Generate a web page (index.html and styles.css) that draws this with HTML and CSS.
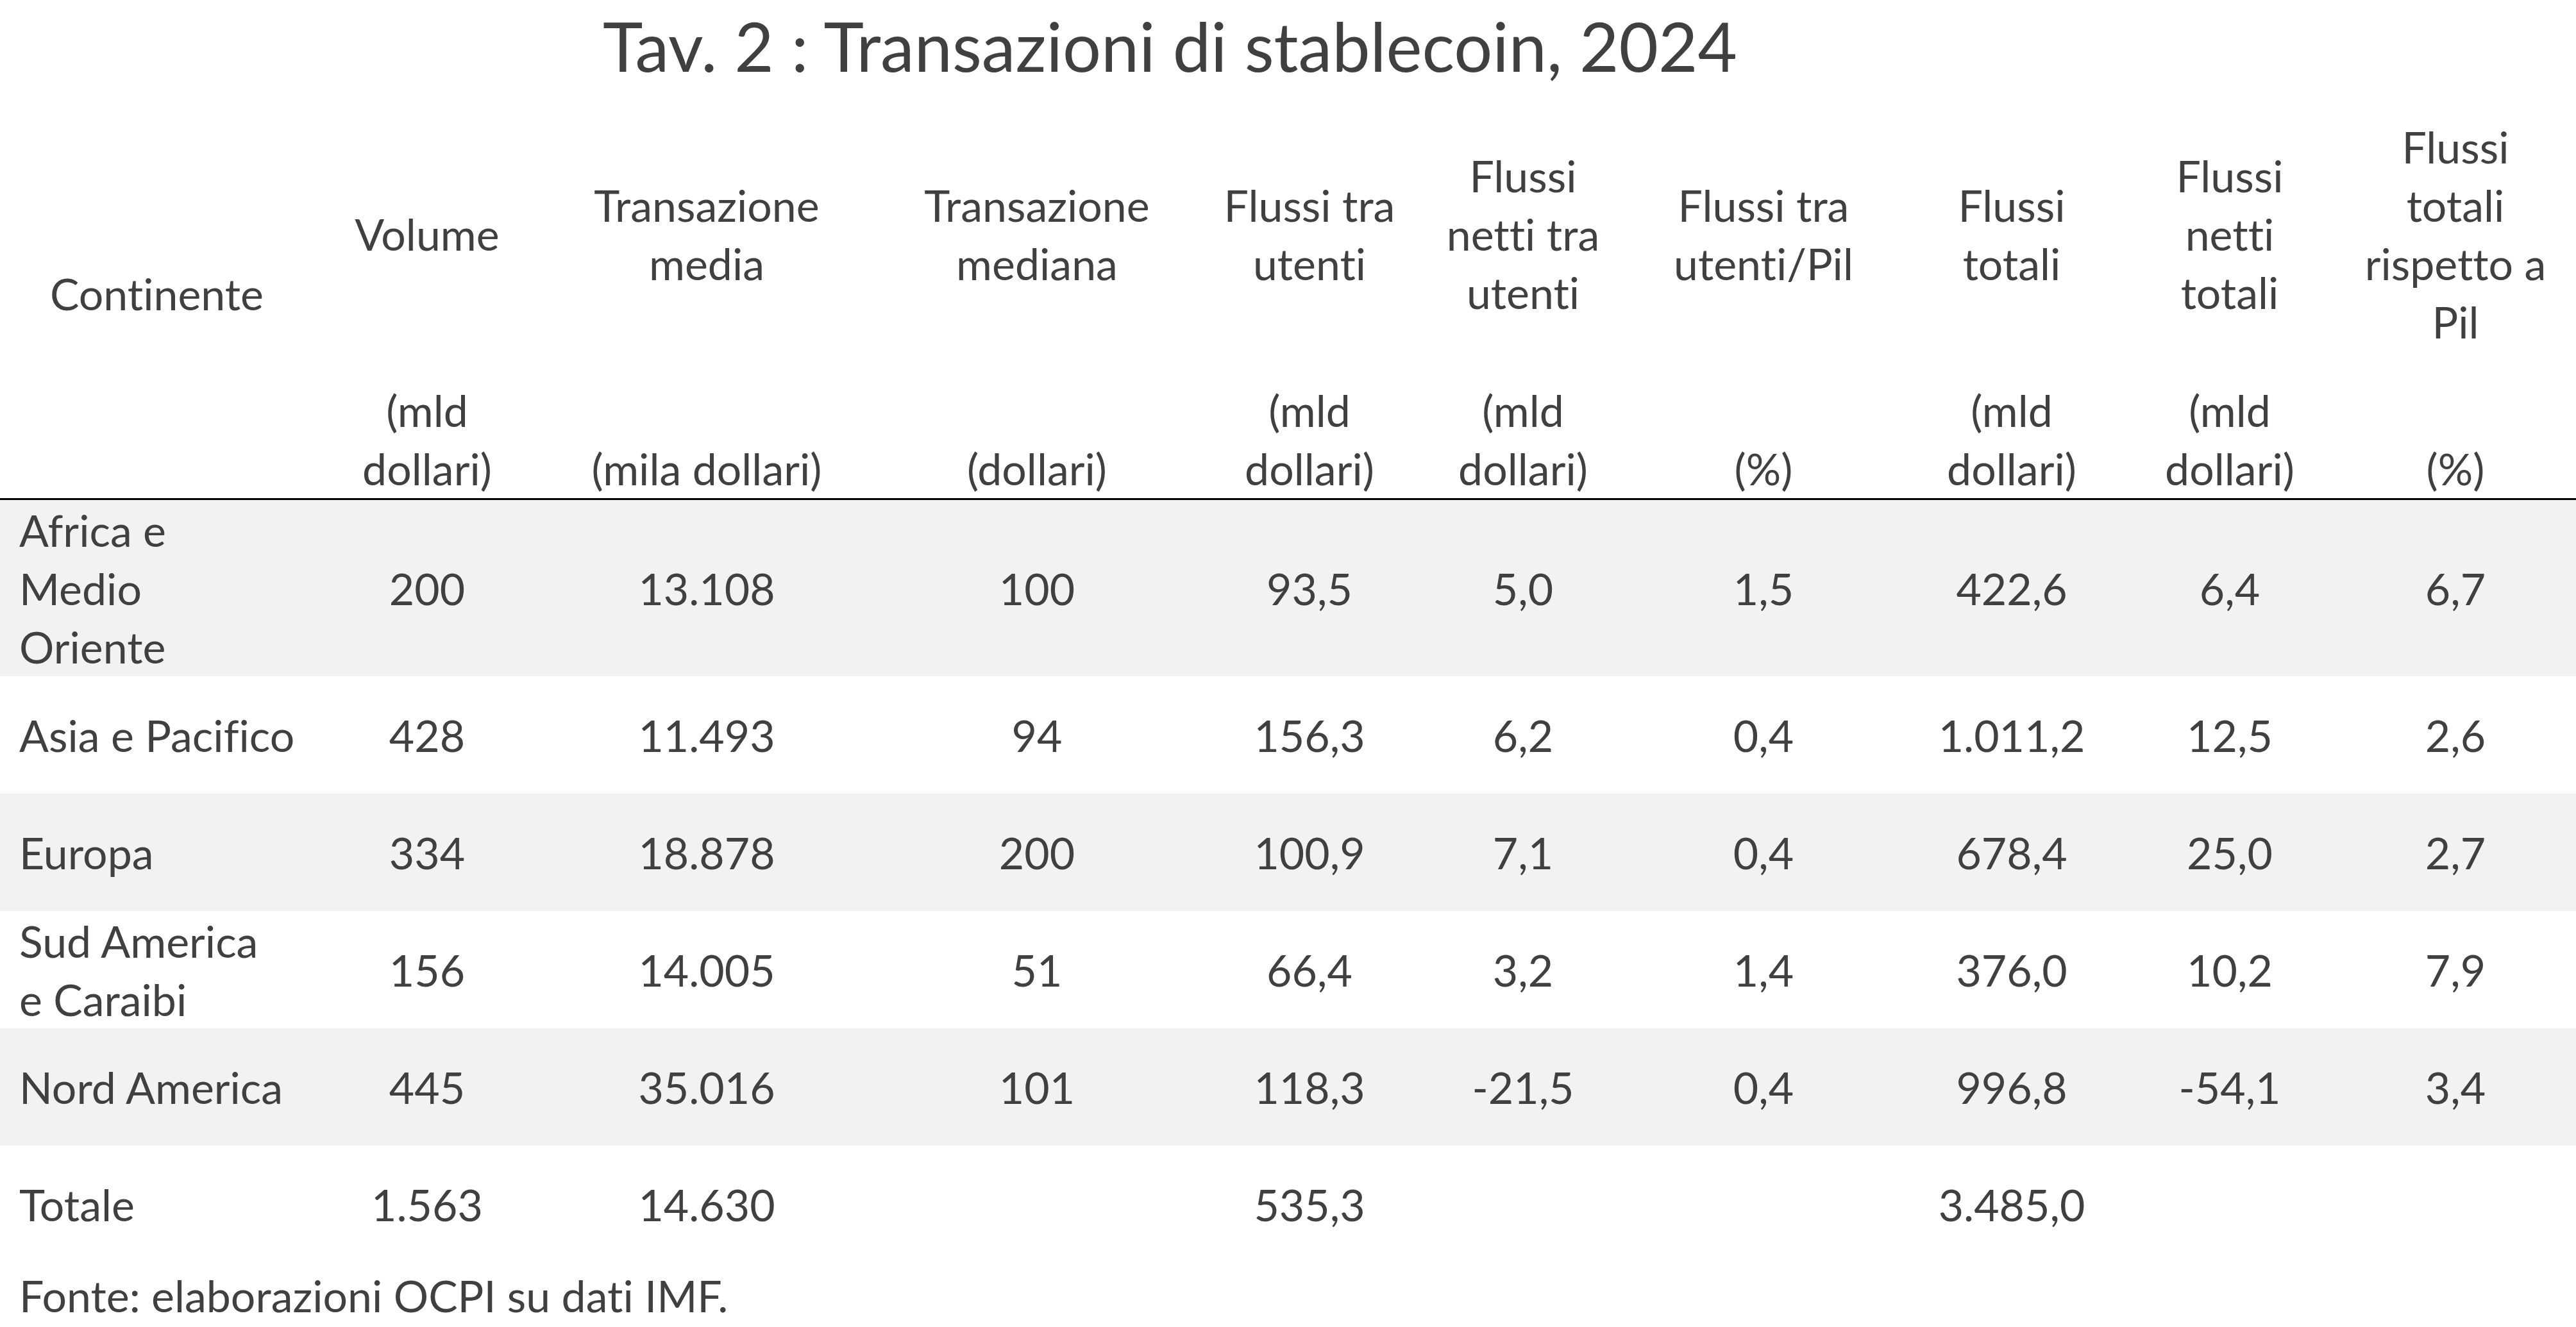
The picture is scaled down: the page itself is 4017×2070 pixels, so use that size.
FILE: index.html
```html
<!DOCTYPE html>
<html lang="it">
<head>
<meta charset="utf-8">
<title>Tav. 2 : Transazioni di stablecoin, 2024</title>
<link rel="stylesheet" href="styles.css">
</head>
<body>
<div class="sheet">
  <h1 class="title">Tav. 2 : Transazioni di stablecoin, 2024</h1>
  <table class="tab">
    <colgroup>
      <col class="c-a"><col class="c-b"><col class="c-c"><col class="c-d"><col class="c-e">
      <col class="c-f"><col class="c-g"><col class="c-h"><col class="c-i"><col class="c-j">
    </colgroup>
    <thead>
      <tr class="head-top">
        <th rowspan="2" class="h-cont">Continente</th>
        <th>Volume</th>
        <th>Transazione<br>media</th>
        <th>Transazione<br>mediana</th>
        <th>Flussi tra<br>utenti</th>
        <th>Flussi<br>netti tra<br>utenti</th>
        <th>Flussi tra<br>utenti/Pil</th>
        <th>Flussi<br>totali</th>
        <th>Flussi<br>netti<br>totali</th>
        <th>Flussi<br>totali<br>rispetto a<br>Pil</th>
      </tr>
      <tr class="head-unit">
        <th>(mld<br>dollari)</th>
        <th>(mila dollari)</th>
        <th>(dollari)</th>
        <th>(mld<br>dollari)</th>
        <th>(mld<br>dollari)</th>
        <th>(%)</th>
        <th>(mld<br>dollari)</th>
        <th>(mld<br>dollari)</th>
        <th>(%)</th>
      </tr>
    </thead>
    <tbody>
      <tr class="row band tall">
        <td class="name">Africa e<br>Medio<br>Oriente</td>
        <td>200</td><td>13.108</td><td>100</td><td>93,5</td><td>5,0</td><td>1,5</td><td>422,6</td><td>6,4</td><td>6,7</td>
      </tr>
      <tr class="row">
        <td class="name">Asia e Pacifico</td>
        <td>428</td><td>11.493</td><td>94</td><td>156,3</td><td>6,2</td><td>0,4</td><td>1.011,2</td><td>12,5</td><td>2,6</td>
      </tr>
      <tr class="row band">
        <td class="name">Europa</td>
        <td>334</td><td>18.878</td><td>200</td><td>100,9</td><td>7,1</td><td>0,4</td><td>678,4</td><td>25,0</td><td>2,7</td>
      </tr>
      <tr class="row">
        <td class="name">Sud America<br>e Caraibi</td>
        <td>156</td><td>14.005</td><td>51</td><td>66,4</td><td>3,2</td><td>1,4</td><td>376,0</td><td>10,2</td><td>7,9</td>
      </tr>
      <tr class="row band">
        <td class="name">Nord America</td>
        <td>445</td><td>35.016</td><td>101</td><td>118,3</td><td>-21,5</td><td>0,4</td><td>996,8</td><td>-54,1</td><td>3,4</td>
      </tr>
      <tr class="row">
        <td class="name">Totale</td>
        <td>1.563</td><td>14.630</td><td></td><td>535,3</td><td></td><td></td><td>3.485,0</td><td></td><td></td>
      </tr>
    </tbody>
  </table>
  <p class="source">Fonte: elaborazioni OCPI su dati IMF.</p>
</div>
</body>
</html>
```

FILE: styles.css
```css
html, body {
  margin: 0;
  padding: 0;
  background: #ffffff;
  overflow: hidden;
}

.sheet {
  width: 4017px;
  height: 2070px;
  font-family: Lato, "Open Sans", "Liberation Sans", sans-serif;
  font-variant-ligatures: none;
  font-feature-settings: "liga" 0, "dlig" 0;
  color: #404040;
}

.title {
  margin: 5px 0 0 0;
  padding-left: 940px;
  font-size: 106px;
  line-height: 133px;
  font-weight: 400;
  color: #404040;
  white-space: nowrap;
}

.tab {
  width: 4017px;
  table-layout: fixed;
  border-collapse: collapse;
  border-spacing: 0;
  font-size: 68px;
  line-height: 91px;
}

.c-a { width: 489px; }
.c-b { width: 354px; }
.c-c { width: 518px; }
.c-d { width: 512px; }
.c-e { width: 338px; }
.c-f { width: 328px; }
.c-g { width: 422px; }
.c-h { width: 352px; }
.c-i { width: 328px; }
.c-j { width: 376px; }

.tab th,
.tab td {
  padding: 0;
  font-weight: 400;
  text-align: center;
  white-space: nowrap;
}

.head-top th {
  height: 453px;
  vertical-align: middle;
}

.head-unit th {
  height: 185px;
  padding-bottom: 1px;
  vertical-align: bottom;
  border-bottom: 3px solid #000000;
}

.tab th.h-cont {
  vertical-align: middle;
  border-bottom: 3px solid #000000;
}

.row td {
  height: 183px;
  vertical-align: middle;
}

.row.tall td {
  height: 275px;
}

.band td {
  background: #f2f2f2;
}

.tab td.name {
  text-align: left;
  padding-left: 30px;
}

.source {
  margin: 11px 0 0 0;
  padding-left: 30px;
  font-size: 68px;
  line-height: 80px;
  white-space: nowrap;
}
```
